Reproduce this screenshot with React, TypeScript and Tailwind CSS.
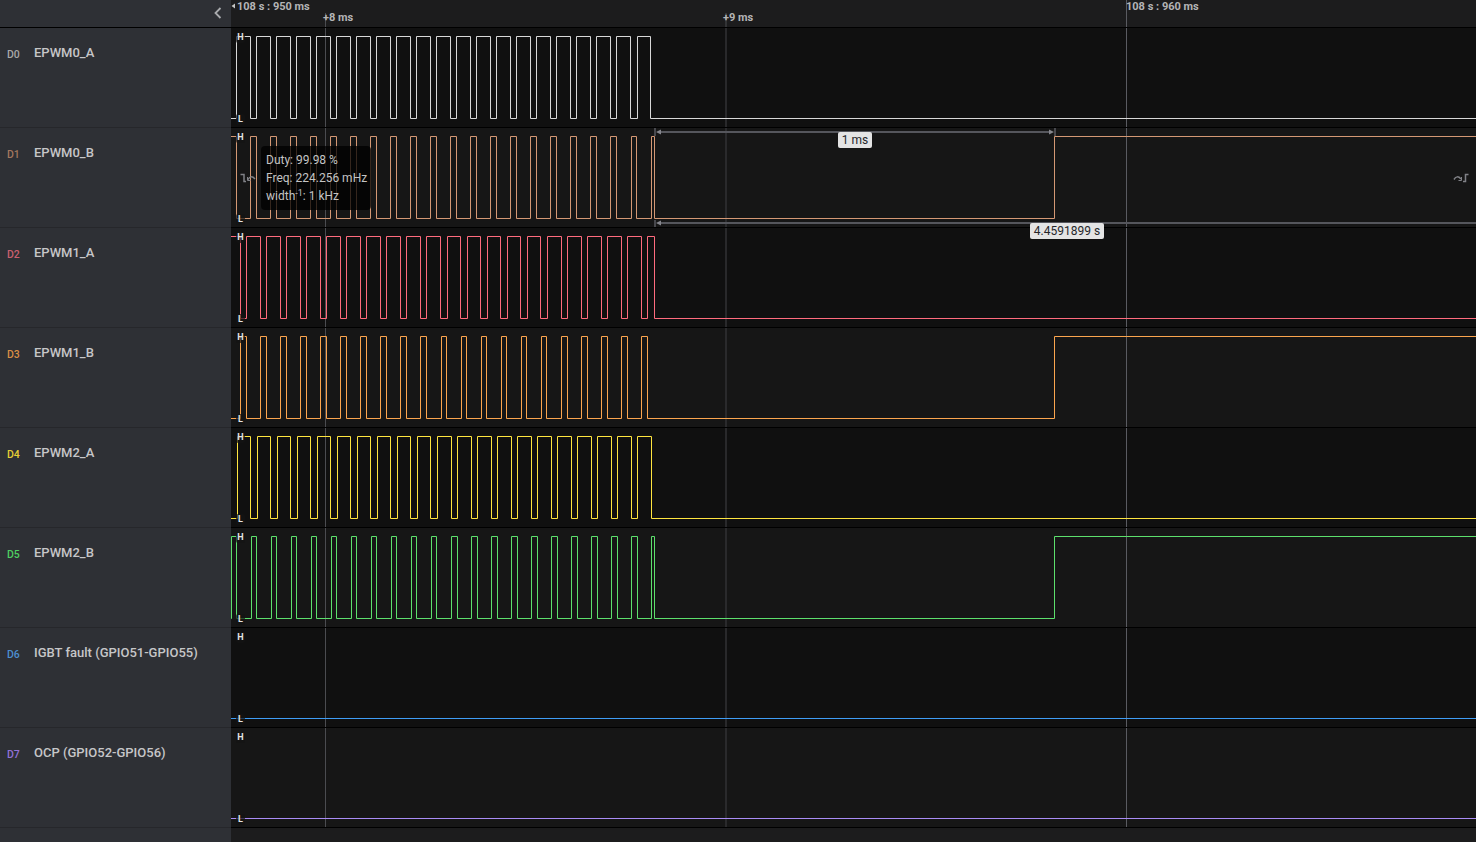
import type { ReactNode } from "react";

const END = 1476;
const HIGH = 8.5;
const LOW = 90.5;

// x positions: start, start+20, ... count items
const run = (start: number, count: number) => Array.from({ length: count }, (_, k) => start + 20 * k);

function wavePath(startHigh: boolean, rises: number[], falls: number[]) {
  const edges: [number, boolean][] = [
    ...rises.map((x): [number, boolean] => [x, true]),
    ...falls.map((x): [number, boolean] => [x, false]),
  ].sort((a, b) => a[0] - b[0]);
  let d = `M231 ${startHigh ? HIGH : LOW}`;
  for (const [x, high] of edges) {
    d += ` H${x} V${high ? HIGH : LOW}`;
  }
  return d + ` H${END}`;
}

const channels = [
  {
    id: "D0",
    name: "EPWM0_A",
    tag: "text-[#a9a9a9]",
    color: "#d8d8d8",
    bg: "bg-[#101010]",
    d: wavePath(false, [...run(236.5, 20), 637.5], run(250.5, 21)),
  },
  {
    id: "D1",
    name: "EPWM0_B",
    tag: "text-[#a5785f]",
    color: "#d49874",
    bg: "bg-[#161616]",
    d: wavePath(true, [...run(250.5, 19), 631.5, 651.5, 1054.5], [236.5, ...run(256.5, 20), 654.5]),
  },
  {
    id: "D2",
    name: "EPWM1_A",
    tag: "text-[#c9606f]",
    color: "#ff6b7d",
    bg: "bg-[#101010]",
    d: wavePath(true, [...run(246.5, 10), ...run(447.5, 11)], [240.5, ...run(260.5, 15), ...run(561.5, 5), 654.5]),
  },
  {
    id: "D3",
    name: "EPWM1_B",
    tag: "text-[#d98f45]",
    color: "#fba54e",
    bg: "bg-[#161616]",
    d: wavePath(false, [...run(240.5, 10), ...run(441.5, 11), 1054.5], [...run(246.5, 16), ...run(567.5, 5)]),
  },
  {
    id: "D4",
    name: "EPWM2_A",
    tag: "text-[#e6cf35]",
    color: "#ffe53f",
    bg: "bg-[#101010]",
    d: wavePath(false, run(237.5, 21), [...run(250.5, 10), ...run(451.5, 11)]),
  },
  {
    id: "D5",
    name: "EPWM2_B",
    tag: "text-[#4fcf62]",
    color: "#5ce06c",
    bg: "bg-[#161616]",
    d: wavePath(false, [231.5, ...run(251.5, 20), 651.5, 1054.5], [236.5, ...run(256.5, 10), ...run(457.5, 10), 654.5]),
  },
  {
    id: "D6",
    name: "IGBT fault (GPIO51-GPIO55)",
    tag: "text-[#4d8fd0]",
    color: "#3f9df5",
    bg: "bg-[#101010]",
    d: wavePath(false, [], []),
  },
  {
    id: "D7",
    name: "OCP (GPIO52-GPIO56)",
    tag: "text-[#9272d8]",
    color: "#a98cf5",
    bg: "bg-[#161616]",
    d: wavePath(false, [], []),
  },
];

function GridLines() {
  return (
    <>
      <path d="M325.5 0V99" stroke="#4b4c50" fill="none" />
      <path d="M726 0V99" stroke="#303033" strokeWidth={1.6} fill="none" />
      <path d="M1126.5 0V99" stroke="#5a5b61" fill="none" />
    </>
  );
}

function Level({ text }: { text: string }) {
  return (
    <span className="flex h-[11px] w-[9px] items-center justify-center rounded-[2px] bg-[#141414]/70 text-[9px] leading-none font-bold text-[#e4e4e4]">
      {text}
    </span>
  );
}

function Measures() {
  return (
    <g fill="none">
      <path d="M661 4H1049" stroke="#55565c" strokeWidth={2} />
      <path d="M655 0V8M1055 0V8" stroke="#55565c" strokeWidth={1.6} />
      <path d="M656 4L661 1.5V6.5ZM1054 4L1049 1.5V6.5Z" fill="#85868d" />
      <path d="M661 95H1476" stroke="#55565c" strokeWidth={2} />
      <path d="M655 92V99" stroke="#55565c" strokeWidth={1.6} />
      <path d="M656 95L661 92.5V97.5Z" fill="#85868d" />
      <path d="M240.5 46.5H244V53.5H246" stroke="#808186" strokeWidth={1.5} />
      <path d="M248 51.5Q251 46.5 255 51" stroke="#808186" strokeWidth={1.5} />
      <path d="M247.5 49V52.5H250.5" stroke="#808186" />
      <path d="M1463 53.5H1465.5V46.5H1468.5" stroke="#808186" strokeWidth={1.5} />
      <path d="M1454 51.5Q1457 46.5 1461 51" stroke="#808186" strokeWidth={1.5} />
      <path d="M1461.5 49V52.5H1458.5" stroke="#808186" />
    </g>
  );
}

function Row({ id, name, tag, color, bg, d, children }: { id: string; name: string; tag: string; color: string; bg: string; d: string; children?: ReactNode }) {
  return (
    <div className="flex h-[100px]">
      <div className="flex w-[231px] shrink-0 border-b border-[#26272b] pt-[16px] pl-[7px]">
        <span className={`mt-[4px] w-[27px] text-[10.5px] leading-[14px] font-medium ${tag}`}>{id}</span>
        <span className="text-[13px] leading-[18px] font-medium text-[#c6c6c8]">{name}</span>
      </div>
      <div className={`relative flex-1 border-b border-black ${bg}`}>
        <svg className="absolute top-0 left-0" width={1245} height={99} viewBox="231 0 1245 99">
          <GridLines />
          <path d={d} stroke={color} fill="none" />
          {id === "D1" && <Measures />}
        </svg>
        <div className="relative flex h-full w-fit flex-col justify-between pt-[4px] pb-[2px] pl-[5px]">
          <Level text="H" />
          <Level text="L" />
        </div>
        {children}
      </div>
    </div>
  );
}

export default function App() {
  return (
    <div className="h-[842px] w-[1476px] overflow-hidden bg-[#2e3035] font-['Roboto',sans-serif]">
      <div className="flex h-[28px] border-b border-black">
        <div className="flex w-[231px] shrink-0 items-start justify-end pt-[7px] pr-[8px]">
          <svg width="10" height="12" viewBox="0 0 10 12" fill="none" stroke="#a9abae" strokeWidth="1.8">
            <path d="M7.5 1L2.5 6L7.5 11" />
          </svg>
        </div>
        <div className="relative flex-1 bg-[#1c1c1d]">
          <svg className="absolute top-0 left-0" width={1245} height={27} viewBox="231 0 1245 27" fill="none">
            <path d="M325.5 13V27M726 13V27" stroke="#4b4c50" />
            <path d="M1126.5 0V27" stroke="#5a5b61" />
            <path d="M231.5 6L235 3.5V8.5Z" fill="#c4c4c4" />
          </svg>
          <div className="relative grid grid-cols-[86px_400px_403px_1fr] pt-[1px] pl-[6px] text-[11px] leading-[11px] font-bold whitespace-nowrap text-[#b4b4b6]">
            <span>108 s : 950 ms</span>
            <span className="col-start-4">108 s : 960 ms</span>
            <span className="col-start-2 row-start-2">+8 ms</span>
            <span className="col-start-3 row-start-2">+9 ms</span>
          </div>
        </div>
      </div>
      {channels.map((c) => (
        <Row key={c.id} {...c}>
          {c.id === "D1" && (
            <>
              <div className="absolute top-[18px] left-[30px] h-[64px] w-[110px] rounded-[4px] bg-black/75 pt-[5px] pl-[5px] text-[12px] leading-[18px] whitespace-nowrap text-[#c4c4c4]">
                <div>Duty: 99.98 %</div>
                <div>Freq: 224.256 mHz</div>
                <div>
                  width<sup className="text-[9px]">-1</sup>: 1 kHz
                </div>
              </div>
              <span className="absolute top-[4px] left-[607px] flex h-[16px] w-[34px] items-center justify-center rounded-[2px] bg-[#e4e4e4] text-[12px] text-[#26272a]">1 ms</span>
              <span className="absolute top-[95px] left-[799px] z-10 flex h-[16px] w-[74px] items-center justify-center rounded-[2px] bg-[#e4e4e4] text-[12px] text-[#26272a]">4.4591899 s</span>
            </>
          )}
        </Row>
      ))}
      <div className="flex h-[14px]">
        <div className="w-[231px] shrink-0" />
        <div className="flex-1 bg-[#1c1c1d]" />
      </div>
    </div>
  );
}
